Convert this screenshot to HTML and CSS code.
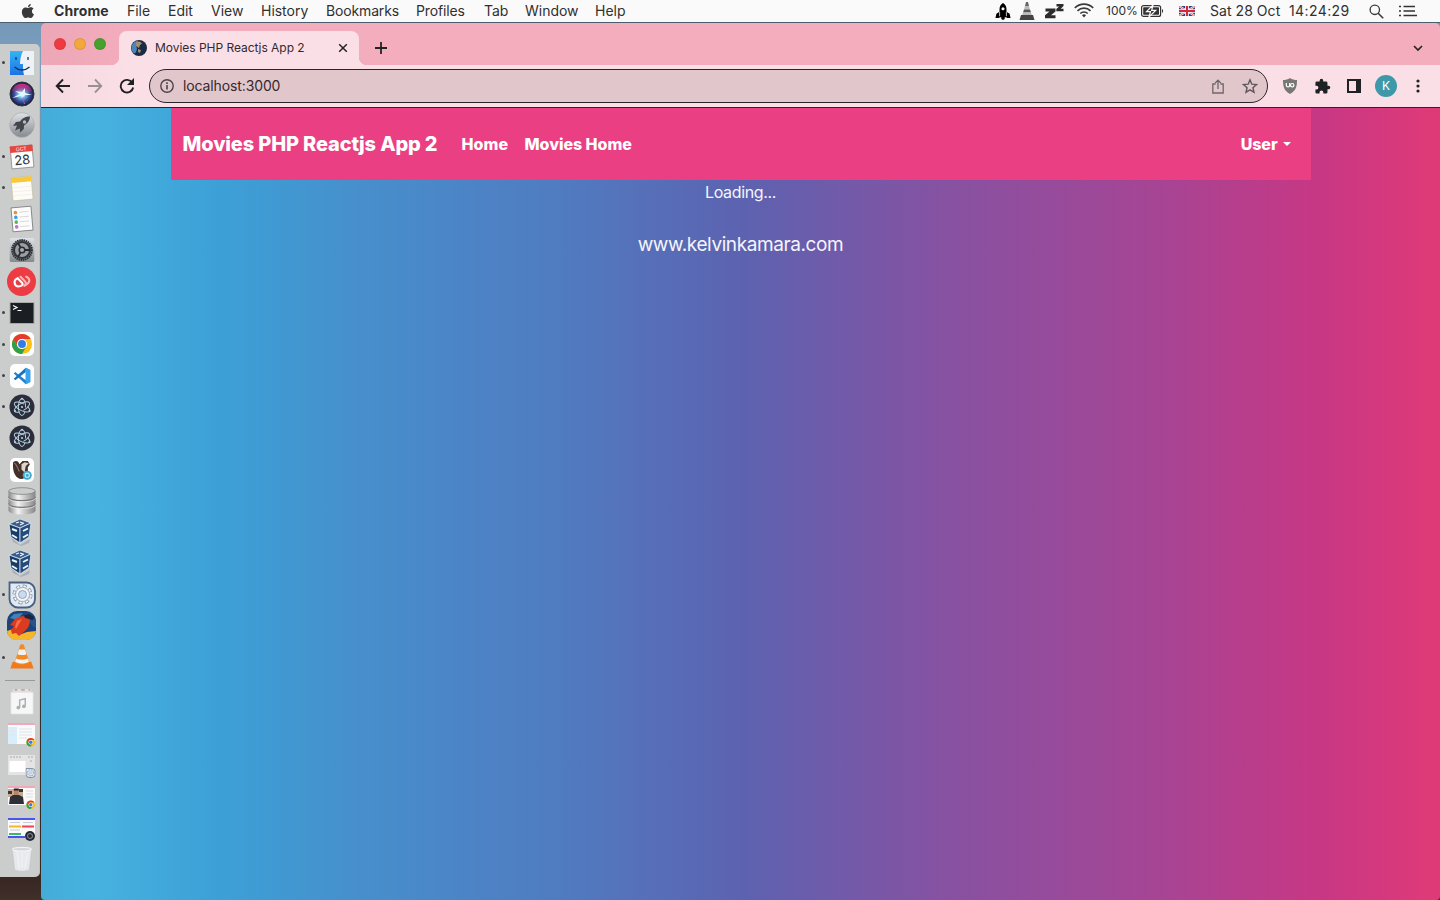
FILE: index.html
```html
<!DOCTYPE html>
<html lang="en">
<head>
<meta charset="utf-8">
<title>Movies PHP Reactjs App 2</title>
<link rel="stylesheet" href="styles.css">
</head>
<body>
<svg class="defs" width="0" height="0">
  <defs>
    <linearGradient id="gBlue" x1="0" y1="0" x2="0" y2="1"><stop offset="0" stop-color="#35b4f6"/><stop offset="1" stop-color="#1b72e6"/></linearGradient>
    <linearGradient id="gSilver" x1="0" y1="0" x2="0" y2="1"><stop offset="0" stop-color="#dfe2e6"/><stop offset="1" stop-color="#85898e"/></linearGradient>
    <linearGradient id="gDisk" x1="0" y1="0" x2="1" y2="0"><stop offset="0" stop-color="#8a8a8a"/><stop offset=".35" stop-color="#f4f4f4"/><stop offset="1" stop-color="#858585"/></linearGradient>
    <radialGradient id="gSiri"><stop offset="0" stop-color="#fff"/><stop offset=".25" stop-color="#7bd3f2"/><stop offset=".65" stop-color="#3a4fa0"/><stop offset="1" stop-color="#15182d"/></radialGradient>
    <linearGradient id="gSiriTop" x1="0" y1="0" x2="0" y2="1"><stop offset="0" stop-color="#d02d80"/><stop offset="1" stop-color="#d02d80" stop-opacity="0"/></linearGradient>
    <symbol id="chrome" viewBox="0 0 24 24">
      <circle cx="12" cy="12" r="11" fill="#fbc117"/>
      <path d="M2.5 6.5A11 11 0 0 1 21.5 6.5H12A5.5 5.5 0 0 0 7.2 14.7z" fill="#e33b2e"/>
      <path d="M2.5 6.5A11 11 0 0 0 12 23l4.8-8.3A5.5 5.5 0 0 1 7.2 14.7z" fill="#2da04c"/>
      <circle cx="12" cy="12" r="5.5" fill="#fff"/><circle cx="12" cy="12" r="4.3" fill="#2f7de8"/>
    </symbol>
    <symbol id="electron" viewBox="0 0 26 26">
      <circle cx="13" cy="13" r="12.5" fill="#2b2e3a"/>
      <g fill="none" stroke="#b4cfdf" stroke-width="1" stroke-dasharray="30 4"><ellipse cx="13" cy="13" rx="8.5" ry="3.6" transform="rotate(28 13 13)"/><ellipse cx="13" cy="13" rx="8.5" ry="3.6" transform="rotate(90 13 13)"/><ellipse cx="13" cy="13" rx="8.5" ry="3.6" transform="rotate(150 13 13)"/></g>
      <g fill="#b4cfdf"><circle cx="13" cy="13" r="1.1"/><circle cx="6" cy="17" r="1.1"/><circle cx="20.500" cy="17" r="1.1"/><circle cx="13" cy="4.800" r="1.1"/></g>
    </symbol>
    <symbol id="vbox" viewBox="0 0 26 28">
      <path d="M4 19l9 8 10-6-1 4-8 3-8-4z" fill="#a9b0b8"/>
      <path d="M2 6L13 1l11 4-11 5z" fill="#3a5f8c" stroke="#dce6ef" stroke-width=".8"/>
      <path d="M2 6l11 4v15L4 19z" fill="#183c69" stroke="#dce6ef" stroke-width=".8"/>
      <path d="M24 5l-11 5v15l9-6z" fill="#234c7c" stroke="#dce6ef" stroke-width=".8"/>
      <path d="M9 5l3-1M13 7l4-2M13 4l3 1" fill="none" stroke="#eef4f8" stroke-width="1.200"/>
      <path d="M5 11l5 2M5 17l5 3M16 13l5-2.500M16 19.500l5-3" fill="none" stroke="#eef4f8" stroke-width="1.900"/>
    </symbol>
    <symbol id="gearbox" viewBox="0 0 28 28">
      <path d="M1.500 1.500h17a8.500 8.500 0 0 1 8.500 8.500v8a8.500 8.500 0 0 1-8.500 8.500H10A8.500 8.500 0 0 1 1.500 18z" fill="#dfeaf6" stroke="#4a5f7e" stroke-width="1.800"/>
      <circle cx="14.500" cy="13.500" r="8.200" fill="none" stroke="#7d8896" stroke-width="3.600" stroke-dasharray="3.700 2.740"/>
      <circle cx="14.500" cy="13.500" r="8.200" fill="none" stroke="#f4f5f7" stroke-width="2.200" stroke-dasharray="2.500 3.940" stroke-dashoffset="-.6"/>
      <circle cx="14.500" cy="13.500" r="7" fill="#f4f5f7" stroke="#8c96a3" stroke-width=".7"/><circle cx="14.500" cy="13.500" r="4" fill="#c5dcf2" stroke="#8c96a3" stroke-width=".8"/>
    </symbol>
  </defs>
</svg>
<div class="desktop">
  <header class="menubar">
    <svg class="apple" viewBox="0 0 16 18"><path d="M11.2.5c.1 1.9-1.5 3.5-3.2 3.5C7.800 2.300 9.500.6 11.200.5zM8.200 5c.8 0 1.700-.8 3.200-.8 1.300 0 2.300.7 2.900 1.600-2.700 1.600-2.200 5.300.5 6.300-.6 1.800-2 4.400-3.700 4.400-1.100 0-1.500-.7-2.900-.7s-1.900.7-2.900.7C3.200 16.500 1 12.700 1 9.500 1 6.200 3 4.300 5.100 4.300 6.500 4.300 7.500 5 8.200 5z" fill="#3a3a3a"/></svg>
    <nav class="menus"><b>Chrome</b><span>File</span><span>Edit</span><span>View</span><span>History</span><span class="tight">Bookmarks</span><span class="tight">Profiles</span><span>Tab</span><span>Window</span><span>Help</span></nav>
    <div class="status">
      <svg class="s-rocket" viewBox="0 0 16 18"><path d="M8 0C5.300 1.500 4.300 4 4.300 6.500v2.700L1 11.500 0 16h3.500l1.300-1h1.400v2l1.800 1 1.800-1v-2h1.400l1.300 1H16l-1-4.500-3.300-2.300V6.500C11.700 4 10.700 1.500 8 0z" fill="#000"/><circle cx="8" cy="6" r="1.600" fill="#fafafa"/><path d="M4.400 9.500v4.500M11.600 9.500v4.500" stroke="#fafafa" stroke-width=".8"/></svg>
      <svg class="s-cone" viewBox="0 0 16 18"><path d="M7 0h2l1 4H6z" fill="#666"/><path d="M6 4h4l1 3.500H5z" fill="#bbb"/><path d="M5 7.500h6l1 3H4z" fill="#555"/><path d="M4 10.500h8l1 3H3z" fill="#bbb"/><path d="M2 13h12l1.500 5H.5z" fill="#444"/></svg>
      <svg class="s-zz" viewBox="0 0 19 15"><path d="M.5 4.500h10v3L6 11.300h4.500v3H0v-3l4.500-3.800h-4zM11.500 0h7v2L15.700 4.800h2.800v2.400h-7.200V5l2.800-2.600h-2.600z" fill="#2c2c2c"/></svg>
      <svg class="s-wifi" viewBox="0 0 20 15"><g fill="none" stroke="#3a3a3a" stroke-width="1.700"><path d="M.8 5a13 13 0 0 1 18.400 0"/><path d="M3.500 7.800a9.200 9.200 0 0 1 13 0"/><path d="M6.300 10.500a5.300 5.300 0 0 1 7.400 0"/></g><path d="M8 12.200a3 3 0 0 1 4 0l-2 2.300z" fill="#3a3a3a"/></svg>
      <span class="pct">100%</span>
      <svg class="s-bat" viewBox="0 0 23 12"><rect x=".6" y=".6" width="19" height="10.800" rx="2" fill="none" stroke="#333" stroke-width="1.200"/><rect x="2.200" y="2.200" width="15.800" height="7.600" rx=".7" fill="#333"/><path d="M21 4c1.500.5 1.500 3.500 0 4z" fill="#333"/><path d="M12 0L5.500 6.700h4L8 12l6.700-6.700h-4z" fill="#333" stroke="#fafafa" stroke-width="1.200"/></svg>
      <svg class="s-flag" viewBox="0 0 16 10"><path fill="#29407c" d="M0 0h16v10H0z"/><path d="M0 0l16 10M16 0L0 10" stroke="#fff" stroke-width="2"/><path d="M0 0l16 10M16 0L0 10" stroke="#d7263a" stroke-width=".7"/><path d="M8 0v10M0 5h16" stroke="#fff" stroke-width="3.600"/><path d="M8 0v10M0 5h16" stroke="#d7263a" stroke-width="2"/></svg>
      <span class="date">Sat 28 Oct</span><span class="time">14:24:29</span>
      <svg class="s-find" viewBox="0 0 15 15"><circle cx="5.800" cy="5.800" r="4.700" fill="none" stroke="#3a3a3a" stroke-width="1.300"/><path d="M9.200 9.200l5 5" stroke="#3a3a3a" stroke-width="1.600"/></svg>
      <svg class="s-list" viewBox="0 0 18 12"><path d="M4.500 1.500H16M4.500 6H16M4.500 10.500H18M0 1.500h2M0 6h2M0 10.500h2" stroke="#333" stroke-width="1.700"/></svg>
    </div>
  </header>
  <div class="work">
    <aside class="dock">
      <div class="app run"><svg class="i24" viewBox="0 0 24 24"><path fill="#edf2f7" d="M0 0h24v24H0z"/><path d="M0 0h13c-2 4-3 8-3 13h3c0 4 .2 8 1 11H0z" fill="url(#gBlue)"/><path d="M6 6v3M18 6v3M4.500 16c4.500 4 10.500 4 15 0" fill="none" stroke="#183453" stroke-width="1.300"/></svg></div>
      <div class="app"><svg class="i26" viewBox="0 0 26 26"><circle cx="13" cy="13" r="12" fill="url(#gSiri)" stroke="#30323f"/><path d="M3 10a10.500 10.500 0 0 1 20 0l-10 4z" fill="url(#gSiriTop)"/><path d="M3 17l8-4-5-3 7 1 3-4 0 5 7 2-7 0-3 3-1-2z" fill="#dffaff"/><path d="M13 14l3 9-1 0z" fill="#e84c9f"/></svg></div>
      <div class="app"><svg class="i26" viewBox="0 0 26 26"><circle cx="13" cy="13" r="12.300" fill="url(#gSilver)" stroke="#a5a8ac" stroke-width=".6"/><path d="M21 4.500c-5 0-8 2-10 5l-4 .5-3 4 4-.4-2 5 5-2-.2 4.200 4-3.800.2-3.500c3.500-2 6-5 6-9z" fill="#43474d"/><circle cx="15.500" cy="10" r="1.700" fill="#b9bdc2"/></svg></div>
      <div class="app run"><svg class="i26 tilt" viewBox="0 0 26 26"><path d="M2 2h22v22H2z" fill="#fdfdfd" stroke="#888" stroke-width=".8"/><path d="M1.700 1.500h22.600V8H1.700z" fill="#e64640"/><text x="13" y="6.700" class="oct">OCT</text><text x="13" y="20.600" class="day">28</text></svg></div>
      <div class="app run"><svg class="i26 tilt" viewBox="0 0 26 26"><path d="M3 2h20v23H3z" fill="#fdfcf8" stroke="#c4b58c" stroke-width=".5"/><path d="M2.800 2h20.400v5H2.800z" fill="#f8c837"/><path d="M4 12h18M4 16h18M4 20h18" stroke="#eeeae1" stroke-width=".6"/></svg></div>
      <div class="app"><svg class="i26 tilt" viewBox="0 0 26 26"><path d="M3 1h20v24H3z" fill="#fcfcfc" stroke="#777" stroke-width=".8"/><circle cx="7" cy="6" r="1.800" fill="#f28b32"/><circle cx="7" cy="10.800" r="1.800" fill="#3a9de9"/><circle cx="7" cy="15.600" r="1.800" fill="#51bc57"/><circle cx="7" cy="20.400" r="1.800" fill="#c76edb"/><path d="M10.500 6H20M10.500 10.800H20M10.500 15.600H20M10.500 20.400H20" stroke="#ccc" stroke-width=".7"/></svg></div>
      <div class="app"><svg class="i26" viewBox="0 0 26 26"><rect x=".7" y="1" width="24.600" height="24" rx="1.500" fill="url(#gSilver)"/><circle cx="13" cy="13" r="10" fill="#777c80" stroke="#26292c" stroke-width="1.800" stroke-dasharray="1.500 .7"/><circle cx="13" cy="13" r="8" fill="#9a9ea2" stroke="#303336" stroke-width="2"/><path d="M13 13H21M13 13L9 6M13 13L9 20" stroke="#2a2d30" stroke-width="1.800"/><circle cx="13" cy="13" r="2.800" fill="#aaa" stroke="#2a2d30" stroke-width="1.500"/></svg></div>
      <div class="app"><svg class="i29" viewBox="0 0 29 29"><circle cx="14.500" cy="14.500" r="14.500" fill="#ec3b43"/><g fill="none" stroke-linecap="round" stroke-linejoin="round" stroke-width="2.100"><path d="M13.500 9.800l4.200 4.200c1.800 1.800 1.200 3.500-.5 4.800l2.800-1.800c3.500-2.200 2.800-6-.8-7.300" stroke="#f9b6b8"/><path d="M15.800 18.800l-4.300-4.300c-1.400-1.600-.8-3.500 1-4.500-3.300.3-5.700 2.500-5.700 5.200 0 3.500 4.500 5.500 9 3.600z" stroke="none"/><path d="M11.500 12.500l4.200 4.200c1.500 1.700-.4 3.800-2.400 3.300C9.500 19 6.500 16.500 7.500 13.500c.6-1.800 2.500-2.500 4-1z" stroke="none"/><path d="M10.800 11.200c-5 1.700-3.800 8.300.7 8.300 3 0 5-2 3.800-3.600l-4-4" stroke="#fff"/></g></svg></div>
      <div class="app run"><svg class="i26" viewBox="0 0 26 26"><path d="M.500 2h25v22H.500z" fill="#aaa"/><path d="M1.500 3h23v20h-23z" fill="#1b1e22"/><path d="M4 5.500l4 2-4 2M8.500 10.500h4" fill="none" stroke="#fff" stroke-width="1.200"/></svg></div>
      <div class="app run"><div class="tile"><svg class="i21"><use href="#chrome"/></svg></div></div>
      <div class="app run"><div class="tile"><svg class="i18" viewBox="0 0 24 24"><path d="M17 1l6 3v16l-6 3L1 8.500 3 6.500l14 11z" fill="#2584d2"/><path d="M17 1L1 15.500l2 2 14-11z" fill="#1673bd"/><path d="M17 1l6 3v16l-6 3z" fill="#38a4ed"/></svg></div></div>
      <div class="app run"><svg class="i26"><use href="#electron"/></svg></div>
      <div class="app"><svg class="i26"><use href="#electron"/></svg></div>
      <div class="app"><div class="tile"><svg class="i21" viewBox="0 0 21 21"><path d="M2 3c3-2 5-1 6 2l3-3 5 0 2 3-2 3c1 6-2 11-6 11-5 0-9-6-8-16z" fill="#443029"/><path d="M10 5l3-2 4 1-3 3-1 6-3-3z" fill="#ded6cd"/><path d="M3 4c2 0 3 4 5 8" stroke="#8e7569" fill="none"/><circle cx="15.500" cy="15.500" r="4.300" fill="#3ea8cd"/><circle cx="15.500" cy="15.500" r="2" fill="none" stroke="#c9edf6"/></svg></div></div>
      <div class="app"><svg class="i28" viewBox="0 0 28 29"><path d="M0 4v20c0 6 28 6 28 0V4z" fill="url(#gDisk)"/><path d="M0 10c0 5.500 28 5.500 28 0M0 17c0 5.500 28 5.500 28 0" fill="none" stroke="#777" stroke-width="1.200"/><path d="M0 11.200c0 5.500 28 5.500 28 0M0 18.200c0 5.500 28 5.500 28 0" fill="none" stroke="#eee" stroke-width=".8"/><ellipse cx="14" cy="4.200" rx="13.600" ry="3.500" fill="#ccc" stroke="#777" stroke-width=".7"/></svg></div>
      <div class="app"><svg class="i27 vb"><use href="#vbox"/></svg></div>
      <div class="app"><svg class="i27 vb"><use href="#vbox"/></svg></div>
      <div class="app run"><svg class="i28"><use href="#gearbox"/></svg></div>
      <div class="app"><svg class="i29" viewBox="0 0 29 29"><rect width="29" height="29" rx="10" fill="#1c437c"/><path d="M3 7l4-4 9-1-6 7z" fill="#3d83bc"/><path d="M22 9l7-1v9l-4-2z" fill="#24548f"/><path d="M0 20l6-2 6 6 8-3 9-1c-1 6-5 9-9 9H9c-5 0-8-3-9-9z" fill="#f5b62c"/><path d="M8 8c4-3 9-4 14-1 2 4 0 9-3 12l-7 6-3-3-4 1-1-4 3-4-4-1z" fill="#dd3b20"/><path d="M10 10l5-2-6 10-1-2z" fill="#f5704b"/><path d="M17 4.500l5-1.500 5 3-1 3-8-2z" fill="#1c2636"/></svg></div>
      <div class="app run"><svg class="i26" viewBox="0 0 26 28"><path d="M3 19h20l2.500 7.500H.5z" fill="#f17a1d"/><path d="M11 1c0-1 4-1 4 0l6 19c-3 3-13 3-16 0z" fill="#f58a25"/><path d="M9.700 6h6.600l1.500 5c-3 1.300-6.600 1.300-9.600 0zM6.700 15.500c4 1.800 8.600 1.800 12.600 0l1.200 3.500c-4 2.500-11 2.500-15 0z" fill="#f4f2f0"/></svg></div>
      <div class="rule"></div>
      <div class="app"><svg class="i26" viewBox="0 0 26 28"><path d="M3 0h20v4H3z" fill="#e5dfdf"/><path d="M5 1h3M12 1h4M20 1h2" stroke="#a77" stroke-width="1"/><path d="M1 3.500h24V27H1z" fill="#f7f7f7" stroke="#ddd" stroke-width=".7"/><path d="M10.500 20v-8l6-1.500v8" fill="none" stroke="#aeb0b4" stroke-width="1.600"/><circle cx="9" cy="20" r="2" fill="#aeb0b4"/><circle cx="15" cy="18.700" r="2" fill="#aeb0b4"/></svg></div>
      <div class="app"><svg class="i28 thumb" viewBox="0 0 28 26"><path fill="#f9fafc" d="M0 1h27v21H0z"/><path fill="#f3a7ba" d="M0 1h27v2H0z"/><path fill="#d9eefa" d="M0 5h9v17H0z"/><path d="M11 7h13M11 10h13M11 13h13M11 16h8M2 9h5M2 13h5" stroke="#dde5eb"/><use href="#chrome" x="18" y="15.500" width="9.500" height="9.500"/></svg></div>
      <div class="app"><svg class="i28 thumb" viewBox="0 0 28 26"><path fill="#e4e4e4" d="M0 2h27v20H0z"/><path fill="#fff" d="M1.500 8h16v11h-16z"/><path d="M2 4h12M20 4h5M22 8h3" stroke="#aaa" stroke-dasharray="2 1"/><use href="#gearbox" x="17.500" y="15" width="10" height="10"/></svg></div>
      <div class="app"><svg class="i28 thumb" viewBox="0 0 28 26"><path fill="#fafafa" d="M0 1h27v19H0z"/><path fill="#f3a7ba" d="M0 1h27v2H0z"/><path fill="#c3ab94" d="M0 4h15v8H0z"/><path d="M0 6h4v3H0zM11 4h4v3h-4z" fill="#3b3431"/><path d="M1 19l1-7 3-2h6l4 2 1 7z" fill="#2d3036"/><path d="M6 4.500h4.500V10H6z" fill="#b88569"/><path d="M5.800 3.500h5v2h-5z" fill="#2b211e"/><path d="M18 6h7M18 9h7M18 12h7" stroke="#ddd"/><use href="#chrome" x="18" y="15" width="9.500" height="9.500"/></svg></div>
      <div class="app"><svg class="i28 thumb" viewBox="0 0 28 26"><path fill="#fafafa" d="M0 2h27v20H0z"/><path fill="#4c54eb" d="M0 2h27v2H0zM0 20h17v2H0z"/><path fill="#f0b72f" d="M1 9.500h12v2H1z"/><path fill="#ef4256" d="M14 9.500h12v2H14z"/><path fill="#3db768" d="M1 17h12v2H1z"/><path d="M2 6.500h10M15 6.500h10M2 14h10" stroke="#c8cdd8"/><circle cx="22" cy="20" r="5" fill="#252a33"/><circle cx="22" cy="20" r="2.500" fill="none" stroke="#8c95a3"/></svg></div>
      <div class="app"><svg class="i26" viewBox="0 0 26 28"><path d="M2.500 3h21L21 25c-1 3-15 3-16 0z" fill="#e7e9ec" stroke="#bfc2c6" stroke-width=".6"/><ellipse cx="13" cy="3.500" rx="10.700" ry="2" fill="#d5d8db" stroke="#f7f8f9"/><path d="M8 7l2 17M13 8v16M19 8l-3 16" stroke="#f1f2f4" stroke-width="1.300"/></svg></div>
    </aside>
    <section class="window">
      <div class="tabstrip">
        <div class="lights"><i class="red"></i><i class="amber"></i><i class="green"></i></div>
        <div class="tab">
          <svg class="globe" viewBox="0 0 16 16"><circle cx="8" cy="8" r="8" fill="#1c2b45"/><path d="M.5 8C.500 4 3 1.500 7 .5l1 3-3 2 1 3-1 4-2 1C1.500 12 .5 10 .5 8z" fill="#4a86bb"/><path d="M5 2.500l4-1 2 2-2 1.500-1 3-3-2zM7 9l3 1-1 3-2-1z" fill="#a58e6c"/></svg>
          <span class="tabtitle">Movies PHP Reactjs App 2</span>
          <svg class="x" viewBox="0 0 10 10"><path d="M1.200 1.200l7.600 7.600M8.800 1.200L1.200 8.800" stroke="#222" stroke-width="1.500"/></svg>
        </div>
        <svg class="plus" viewBox="0 0 12 12"><path d="M6 0v12M0 6h12" stroke="#222" stroke-width="1.800"/></svg>
        <svg class="chev" viewBox="0 0 10 7"><path d="M1 1l4 4 4-4" fill="none" stroke="#222" stroke-width="1.600"/></svg>
      </div>
      <div class="toolbar">
        <svg class="nav" viewBox="0 0 16 16"><path d="M15 8H2M8 1.500L1.700 8 8 14.500" fill="none" stroke="#202124" stroke-width="1.900"/></svg>
        <svg class="nav" viewBox="0 0 16 16"><path d="M1 8h13M8 1.500L14.300 8 8 14.500" fill="none" stroke="#9c8f93" stroke-width="1.800"/></svg>
        <svg class="nav" viewBox="0 0 16 16"><path d="M13.300 4.700A6.300 6.300 0 1 0 14.200 9.500" fill="none" stroke="#202124" stroke-width="1.900"/><path d="M15 0v7H8z" fill="#202124"/></svg>
        <div class="omnibox">
          <svg class="info" viewBox="0 0 14 14"><circle cx="7" cy="7" r="6.200" fill="none" stroke="#4b4548" stroke-width="1.400"/><path d="M7 6v4.500M7 3.300v1.600" stroke="#4b4548" stroke-width="1.600"/></svg>
          <span class="url">localhost:3000</span>
          <svg class="share" viewBox="0 0 12 15"><path d="M3.500 5H.8v9h10.400V5H8.500M6 10V1.500M3.200 4L6 1.200 8.800 4" fill="none" stroke="#6f6669" stroke-width="1.300"/></svg>
          <svg class="star" viewBox="0 0 24 24"><path d="M12 2.800l2.700 6.500 7 .6-5.300 4.600 1.600 6.900-6-3.700-6 3.700 1.600-6.900L2.300 9.900l7-.6z" fill="none" stroke="#5f585b" stroke-width="2.100"/></svg>
        </div>
        <div class="ext">
          <svg class="shield" viewBox="0 0 14 16"><path d="M7 0c2 1.500 4.500 2 7 2 0 7-1 10.500-7 14C1 12.500 0 9 0 2c2.500 0 5-.5 7-2z" fill="#777"/><path d="M3.300 5v2.300a1.700 1.700 0 0 0 3.400 0V5" fill="none" stroke="#fff" stroke-width="1.200"/><circle cx="9.200" cy="7.200" r="1.700" fill="none" stroke="#fff" stroke-width="1.200"/></svg>
          <svg class="puzzle" viewBox="0 0 24 24"><path d="M20.500 11H19V7a2 2 0 0 0-2-2h-4V3.500a2.500 2.500 0 0 0-5 0V5H4a2 2 0 0 0-2 2v3.800h1.500a2.700 2.700 0 0 1 0 5.400H2V20a2 2 0 0 0 2 2h3.800v-1.500a2.700 2.700 0 0 1 5.400 0V22H17a2 2 0 0 0 2-2v-4h1.500a2.500 2.500 0 0 0 0-5z" fill="#202124"/></svg>
          <svg class="panel" viewBox="0 0 14 14"><path d="M1 1h12v12H1z" fill="none" stroke="#202124" stroke-width="2"/><path d="M9 1h4v12H9z" fill="#202124"/></svg>
          <span class="avatar">K</span>
          <svg class="dots" viewBox="0 0 4 14"><g fill="#202124"><circle cx="2" cy="2" r="1.600"/><circle cx="2" cy="7" r="1.600"/><circle cx="2" cy="12" r="1.600"/></g></svg>
        </div>
      </div>
      <main class="page">
        <nav class="navbar"><a class="brand">Movies PHP Reactjs App 2</a><a class="home">Home</a><a class="movies">Movies Home</a><a class="user">User<i class="caret"></i></a></nav>
        <p class="loading">Loading...</p>
        <p class="site">www.kelvinkamara.com</p>
      </main>
    </section>
  </div>
</div>
</body>
</html>
```
FILE: styles.css
```css
* { box-sizing: border-box; }
body { margin: 0; font-family: Inter, "Liberation Sans", sans-serif; overflow: hidden; }
svg { display: block; flex: none; }
.defs { position: absolute; }
.desktop { width: 1440px; height: 900px; display: flex; flex-direction: column; background: linear-gradient(#7194b4 0, #7b9fbe 60px, #54616b 400px, #33302f 700px, #382722 880px, #40302a 900px); }

.menubar { height: 23px; flex: none; display: flex; align-items: center; background: #fafafa; border-bottom: 1px solid #4b5e6c; color: #303030; font-size: 14px; white-space: nowrap; }
.apple { width: 14px; height: 17px; margin: 0 19px 0 21px; }
.menus { display: grid; grid-template-columns: 73px 41px 43px 50px 65px 90px 68px 41px 70px 41px; letter-spacing: -.02px; padding-bottom: 2px; }
.menus b { font-weight: 700; letter-spacing: .1px; }
.menus .tight { letter-spacing: -.15px; }
.status { margin-left: auto; display: flex; align-items: center; }
.s-rocket { width: 16px; height: 17px; margin-right: 8px; }
.s-cone { width: 16px; height: 18px; margin-right: 10px; }
.s-zz { width: 19px; height: 15px; margin-right: 10px; }
.s-wifi { width: 20px; height: 15px; margin: 0 12px 2px 0; }
.pct { width: 35px; font-size: 12px; letter-spacing: 0; padding-bottom: 1px; }
.s-bat { width: 23px; height: 12px; margin-right: 15px; }
.s-flag { width: 16px; height: 10px; margin-right: 15px; }
.date { width: 79px; letter-spacing: .05px; padding-bottom: 2px; }
.time { width: 80px; letter-spacing: .4px; padding-bottom: 2px; }
.s-find { width: 15px; height: 15px; margin-right: 15px; }
.s-list { width: 18px; height: 12px; margin-right: 23px; }

.work { flex: 1; display: flex; min-height: 0; }
.dock { width: 40px; height: 833px; margin: 21px 1px 0 0; padding-top: 3px; flex: none; background: #cbcccc; border-radius: 0 5px 5px 0; border-right: 1px solid #c0c0c0; }
.app { height: 31.300px; padding-left: 4px; display: flex; align-items: center; justify-content: center; position: relative; }
.run::before { content: ""; position: absolute; left: 2px; top: 14px; width: 3px; height: 3px; border-radius: 50%; background: #444; }
.rule { height: 13.700px; margin: 0 4px 0 5px; padding-top: 7px; }
.rule::before { content: ""; display: block; height: 1px; background: #999; }
.i18 { width: 18px; height: 18px; }
.i21 { width: 22px; height: 22px; }
.i24 { width: 24px; height: 24px; }
.i26 { width: 26px; height: 26px; }
.i27 { width: 26px; height: 28px; }
.vb { margin-right: 3px; }
.i28 { width: 28px; height: 28px; }
.i29 { width: 29px; height: 29px; }
.thumb { margin-top: 3px; }
.tilt { transform: rotate(-5deg); }
.tile { width: 24px; height: 24px; border-radius: 5px; background: #fff; display: flex; align-items: center; justify-content: center; }
.oct { font-size: 5px; fill: #fff; text-anchor: middle; }
.day { font-size: 13px; fill: #333; text-anchor: middle; }

.window { flex: 1; display: flex; flex-direction: column; min-width: 0; border-radius: 5px 5px 4px 4px; overflow: hidden; }
.tabstrip { height: 42px; flex: none; display: flex; align-items: flex-end; background: linear-gradient(90deg, #eda6b6, #f4adbd 90px); }
.lights { display: flex; gap: 8px; padding: 0 13px 15px; }
.lights i { width: 12px; height: 12px; border-radius: 50%; border: 1px solid rgba(110, 60, 30, .15); }
.red { background: #ed3b41; }
.amber { background: #f3a83c; }
.green { background: #44a12d; }
.tab { width: 240px; height: 34px; display: flex; align-items: center; padding: 0 11px 0 12px; background: #fbdfe7; border-radius: 8px 8px 0 0; position: relative; }
.tab::before, .tab::after { content: ""; position: absolute; bottom: 0; width: 8px; height: 8px; }
.tab::before { left: -8px; background: radial-gradient(circle at 0 0, transparent 8px, #fbdfe7 8.500px); }
.tab::after { right: -8px; background: radial-gradient(circle at 100% 0, transparent 8px, #fbdfe7 8.500px); }
.globe { width: 16px; height: 16px; margin-right: 8px; }
.tabtitle { font-size: 12px; letter-spacing: -.03px; color: #33292d; white-space: nowrap; padding-bottom: 1px; }
.x { width: 10px; height: 10px; margin-left: auto; }
.plus { width: 12px; height: 12px; margin: 0 0 11px 16px; }
.chev { width: 10px; height: 7px; margin: 0 17px 13px auto; }
.toolbar { height: 43px; flex: none; display: flex; align-items: center; padding: 0 19px 0 14px; background: linear-gradient(90deg, #f4d9e0, #fbdfe7 90px); border-bottom: 1px solid #28252a; }
.nav { width: 16px; height: 16px; margin-right: 16px; }
.nav:nth-child(3) { margin-right: 14px; }
.omnibox { width: 1119px; height: 34px; flex: none; display: flex; align-items: center; padding: 0 9px 0 10px; border: 1px solid #29252a; border-radius: 17px; background: #e1c6cc; }
.info { width: 14px; height: 14px; margin-right: 9px; }
.url { font-size: 14px; color: #35292d; letter-spacing: -.12px; padding-bottom: 1px; }
.share { width: 12px; height: 15px; margin: 0 18px 0 auto; }
.star { width: 16px; height: 16px; }
.ext { display: flex; align-items: center; margin-left: 15px; }
.shield { width: 14px; height: 16px; margin-right: 17px; }
.puzzle { width: 17px; height: 17px; margin-right: 16px; }
.panel { width: 14px; height: 14px; margin-right: 14px; }
.avatar { width: 22px; height: 22px; border-radius: 50%; background: #3d98a9; color: #fff; font-size: 12px; line-height: 22px; text-align: center; margin-right: 19px; }
.dots { width: 4px; height: 14px; }

.page { flex: 1; display: flex; flex-direction: column; align-items: center; background: linear-gradient(90deg, #44acd8 0, #47b2e0 50px, #3ca0d6 180px, #478fcc 320px, #4c84c6 430px, #507bc0 520px, #5d62b0 705px, #8652a2 900px, #a84493 1130px, #c83784 1280px, #de3a78 1390px); color: #f4f5fb; }
.navbar { width: 1140px; height: 72px; display: flex; align-items: center; padding: 0 20px 0 12px; background: #ea3f83; color: #fff; font-weight: 800; font-size: 16px; white-space: nowrap; }
.brand { width: 279px; font-size: 20px; letter-spacing: -.14px; }
.home { width: 63px; letter-spacing: .1px; }
.movies { letter-spacing: -.04px; }
.user { margin-left: auto; display: flex; align-items: center; gap: 5px; letter-spacing: -.1px; }
.caret { border: 4px solid transparent; border-top-color: #fff; border-bottom: 0; }
.loading { margin: 0; font-size: 16px; line-height: 24px; letter-spacing: -.35px; }
.site { margin: 26px 0 0; font-size: 19px; line-height: 30px; letter-spacing: -.4px; }
```
